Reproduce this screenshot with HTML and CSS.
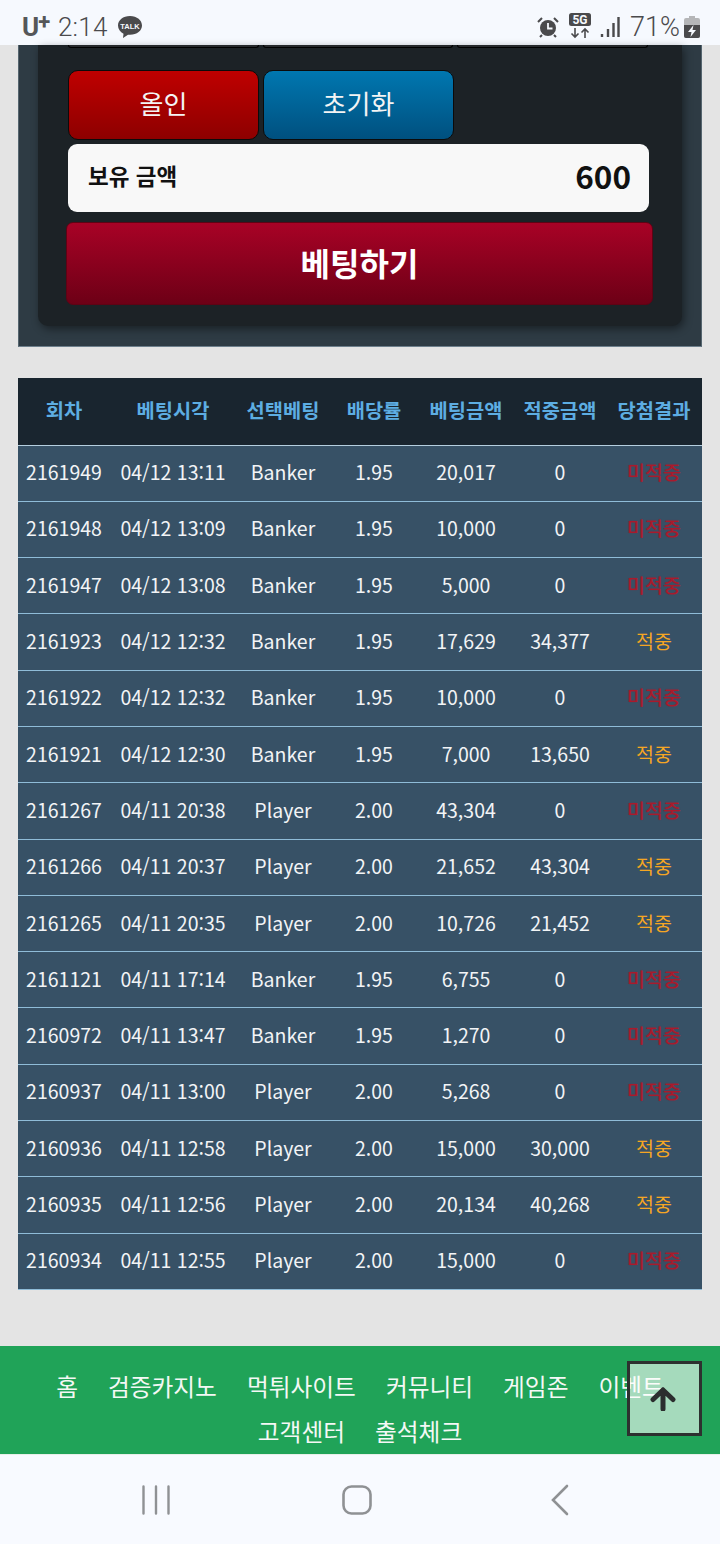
FILE: index.html
```html
<!DOCTYPE html>
<html lang="ko">
<head>
<meta charset="utf-8">
<title>베팅</title>
<link rel="stylesheet" href="styles.css">
</head>
<body>
<div class="screen">
  <header class="status">
    <div class="status-left">
      <span class="carrier">U<sup>+</sup></span>
      <span class="clock">2:14</span>
      <svg class="talk" width="26" height="24" viewBox="0 0 26 24"><path d="M13 1C6 1 1 5.200 1 10.500c0 3.500 2.200 6.500 5.500 8.200L6 23l5-3.300c.7.100 1.300.1 2 .1 7 0 12-4.200 12-9.300S20 1 13 1z" fill="#4a4a4c"/><text x="13" y="13.500" class="talk-text">TALK</text></svg>
    </div>
    <div class="status-right">
      <svg width="22" height="22" viewBox="0 0 22 22"><circle cx="11" cy="12" r="8" fill="#4a4a4c"/><path d="M11 7v5.500h4.500" fill="none" stroke="#f6f9fe" stroke-width="1.800"/><path d="M1 6l4-4M21 6l-4-4M5 19l-2 2M17 19l2 2" stroke="#4a4a4c" stroke-width="2"/></svg>
      <svg class="fiveg" width="24" height="26" viewBox="0 0 24 26"><rect x="1" y="0" width="22" height="13" rx="2.500" fill="#4a4a4c"/><text x="12" y="11" class="fiveg-text">5G</text><path d="M7 15v9M3.500 20.500L7 24l3.500-3.500M17 25v-9M13.500 19.500L17 16l3.500 3.500" fill="none" stroke="#4a4a4c" stroke-width="1.600"/></svg>
      <svg class="signal" width="20" height="22" viewBox="0 0 20 22"><path d="M2 18v3M8 13v8M13.500 7v14M18.500 1v20" stroke="#4a4a4c" stroke-width="2.400" fill="none"/></svg>
      <span class="battery-text">71%</span>
      <svg width="16" height="22" viewBox="0 0 16 22"><path d="M5 0h6v2h3a2 2 0 0 1 2 2v16a2 2 0 0 1-2 2H2a2 2 0 0 1-2-2V4a2 2 0 0 1 2-2h3z" fill="#b5b6b8"/><path d="M0 9h16v11a2 2 0 0 1-2 2H2a2 2 0 0 1-2-2z" fill="#4a4a4c"/><path d="M9.500 9L4 16h3.500L6.500 21 12 14H8.500z" fill="#f6f9fe"/></svg>
    </div>
  </header>

  <main class="content">
    <section class="panel">
      <div class="inner">
        <div class="stub-row">
          <div class="stub"></div><div class="stub"></div><div class="stub"></div>
        </div>
        <div class="btn-row">
          <button class="chip chip-red"><span class="lift">올인</span></button>
          <button class="chip chip-blue"><span class="lift">초기화</span></button>
        </div>
        <div class="balance"><span class="balance-label">보유 금액</span><span class="balance-value">600</span></div>
        <button class="bet"><span class="lift">베팅하기</span></button>
      </div>
    </section>

    <table class="history">
      <colgroup>
        <col class="c1"><col class="c2"><col class="c3"><col class="c4"><col class="c5"><col class="c6"><col class="c7">
      </colgroup>
      <thead>
        <tr><th>회차</th><th>베팅시각</th><th>선택베팅</th><th>배당률</th><th>베팅금액</th><th>적중금액</th><th>당첨결과</th></tr>
      </thead>
      <tbody>
        <tr><td>2161949</td><td>04/12 13:11</td><td>Banker</td><td>1.95</td><td>20,017</td><td>0</td><td class="miss">미적중</td></tr>
        <tr><td>2161948</td><td>04/12 13:09</td><td>Banker</td><td>1.95</td><td>10,000</td><td>0</td><td class="miss">미적중</td></tr>
        <tr><td>2161947</td><td>04/12 13:08</td><td>Banker</td><td>1.95</td><td>5,000</td><td>0</td><td class="miss">미적중</td></tr>
        <tr><td>2161923</td><td>04/12 12:32</td><td>Banker</td><td>1.95</td><td>17,629</td><td>34,377</td><td class="hit">적중</td></tr>
        <tr><td>2161922</td><td>04/12 12:32</td><td>Banker</td><td>1.95</td><td>10,000</td><td>0</td><td class="miss">미적중</td></tr>
        <tr><td>2161921</td><td>04/12 12:30</td><td>Banker</td><td>1.95</td><td>7,000</td><td>13,650</td><td class="hit">적중</td></tr>
        <tr><td>2161267</td><td>04/11 20:38</td><td>Player</td><td>2.00</td><td>43,304</td><td>0</td><td class="miss">미적중</td></tr>
        <tr><td>2161266</td><td>04/11 20:37</td><td>Player</td><td>2.00</td><td>21,652</td><td>43,304</td><td class="hit">적중</td></tr>
        <tr><td>2161265</td><td>04/11 20:35</td><td>Player</td><td>2.00</td><td>10,726</td><td>21,452</td><td class="hit">적중</td></tr>
        <tr><td>2161121</td><td>04/11 17:14</td><td>Banker</td><td>1.95</td><td>6,755</td><td>0</td><td class="miss">미적중</td></tr>
        <tr><td>2160972</td><td>04/11 13:47</td><td>Banker</td><td>1.95</td><td>1,270</td><td>0</td><td class="miss">미적중</td></tr>
        <tr><td>2160937</td><td>04/11 13:00</td><td>Player</td><td>2.00</td><td>5,268</td><td>0</td><td class="miss">미적중</td></tr>
        <tr><td>2160936</td><td>04/11 12:58</td><td>Player</td><td>2.00</td><td>15,000</td><td>30,000</td><td class="hit">적중</td></tr>
        <tr><td>2160935</td><td>04/11 12:56</td><td>Player</td><td>2.00</td><td>20,134</td><td>40,268</td><td class="hit">적중</td></tr>
        <tr><td>2160934</td><td>04/11 12:55</td><td>Player</td><td>2.00</td><td>15,000</td><td>0</td><td class="miss">미적중</td></tr>
      </tbody>
    </table>
  </main>

  <footer class="site-nav">
    <a>홈</a><a>검증카지노</a><a>먹튀사이트</a><a>커뮤니티</a><a>게임존</a><a>이벤트</a><a>고객센터</a><a>출석체크</a>
    <div class="to-top">
      <svg width="26" height="24" viewBox="0 0 26 24"><path d="M13 3L3 12.500M13 3l10 9.500M13 4v18" fill="none" stroke="#2b2d2e" stroke-width="5" stroke-linecap="round"/></svg>
    </div>
  </footer>

  <nav class="android">
    <svg class="recents" width="28" height="30" viewBox="0 0 28 30"><path d="M1.500 1.500v27M14 1.500v27M26.500 1.500v27" stroke="#8f9194" stroke-width="2.400" stroke-linecap="round" fill="none"/></svg>
    <svg class="home" width="30" height="30" viewBox="0 0 30 30"><rect x="1.500" y="1.500" width="27" height="27" rx="8" fill="none" stroke="#8f9194" stroke-width="2.600"/></svg>
    <svg class="back" width="18" height="32" viewBox="0 0 18 32"><path d="M16 2L2 16l14 14" fill="none" stroke="#8f9194" stroke-width="2.600" stroke-linecap="round"/></svg>
  </nav>
</div>
</body>
</html>
```
FILE: styles.css
```css
* { box-sizing: border-box; }
html, body { margin: 0; padding: 0; }
body {
  background: #e4e4e4;
  font-family: "Noto Sans CJK KR", "Noto Sans", sans-serif;
  color: #fff;
}
.screen {
  width: 720px;
  height: 1544px;
  position: relative;
  display: flex;
  flex-direction: column;
  overflow: hidden;
}

/* status bar */
.status {
  height: 45px;
  flex: none;
  background: #f6f9fe;
  color: #4a4a4c;
  display: flex;
  justify-content: space-between;
  align-items: center;
  padding: 8px 20px 0 22px;
  font-family: Roboto, sans-serif;
}
.status-left, .status-right { display: flex; align-items: center; }
.carrier { font-weight: 700; font-size: 26px; line-height: 26px; width: 36px; color: #555759; }
.carrier sup { font-size: 22px; line-height: 0; vertical-align: 7px; margin-left: -1px; }
.clock { font-weight: 300; font-size: 26px; line-height: 30px; letter-spacing: .2px; }
.talk { margin-left: 9px; margin-top: 1px; }
.talk-text { font: 700 7.500px "Liberation Sans", sans-serif; fill: #f6f9fe; text-anchor: middle; }
.status-right svg { flex: none; }
.fiveg { margin-left: 9px; margin-bottom: 2px; }
.fiveg-text { font: 700 12px Roboto, sans-serif; fill: #f6f9fe; text-anchor: middle; }
.signal { margin-left: 8px; }
.battery-text { font-weight: 300; font-size: 27px; line-height: 30px; margin-left: 10px; margin-right: 4px; }

/* betting panel */
.content { flex: 1; padding: 0 18px; }
.panel {
  height: 302px;
  padding: 0 19px 20px 19px;
  background: #2e3b44;
  border-bottom: 1px solid #6d7f8c;
  border-right: 1px solid #55656f;
  border-left: 1px solid #55656f;
}
.inner {
  height: 281px;
  padding: 0 34px 0 30px;
  background: #1c2226;
  border-radius: 0 0 10px 10px;
  box-shadow: 2px 3px 8px rgba(0, 0, 0, .45);
}
.stub-row { display: flex; gap: 4px; }
.stub {
  width: 191px;
  height: 3px;
  border: 1px solid #000;
  border-top: 0;
  border-radius: 0 0 8px 8px;
  background: #26292c;
}
.btn-row { display: flex; gap: 4px; margin-top: 22px; }
.chip {
  width: 191px;
  height: 70px;
  padding: 0;
  border: 1px solid #0b0b0b;
  border-radius: 10px;
  color: #f4f4f4;
  font: 400 26px/1 "Noto Sans CJK KR", sans-serif;
}
.chip-red { background: linear-gradient(#bf0000, #8d0000); }
.chip-blue { background: linear-gradient(#0077b0, #00507f); }
.lift { display: block; margin-top: -4px; }
.balance {
  margin-top: 4px;
  width: 581px;
  height: 68px;
  padding: 0 18px 6px 20px;
  background: #f8f8f8;
  border-radius: 9px;
  color: #111;
  display: flex;
  justify-content: space-between;
  align-items: center;
}
.balance-label { font-weight: 700; font-size: 22.500px; }
.balance-value { font-weight: 700; font-size: 31.500px; }
.bet {
  display: block;
  margin: 10px 0 0 -2px;
  width: 587px;
  height: 83px;
  padding: 0;
  border: 1px solid #5e0314;
  border-radius: 7px;
  background: linear-gradient(#a80226, #6d0016);
  color: #fff;
  font: 700 32px/1 "Noto Sans CJK KR", sans-serif;
}

/* history table */
.history {
  margin-top: 31px;
  width: 684px;
  table-layout: fixed;
  border-collapse: collapse;
  font-size: 19.500px;
  text-align: center;
}
.c1 { width: 92px; }
.c2 { width: 126px; }
.c3 { width: 94px; }
.c4 { width: 88px; }
.c5 { width: 96px; }
.c6 { width: 92px; }
.c7 { width: 96px; }
.history th {
  height: 67px;
  padding: 0 0 3px;
  background: #19252f;
  color: #5dade2;
  font-weight: 700;
  font-size: 19.800px;
  white-space: nowrap;
  border-bottom: 1px solid #b5cfe0;
}
.history td {
  height: 56.300px;
  padding: 0 0 3px;
  background: #375166;
  color: #f2f4f6;
  white-space: nowrap;
  border-bottom: 1px solid #8fbcd8;
}
.history td.miss { color: #a91a2c; text-shadow: 0 0 1px #a91a2c; }
.history td.hit { color: #f5a623; }

/* green site nav */
.site-nav {
  position: relative;
  flex: none;
  height: 108px;
  padding: 18px 40px 0;
  background: #20a358;
  display: flex;
  flex-wrap: wrap;
  justify-content: center;
  align-content: flex-start;
  column-gap: 30px;
  font-size: 23.700px;
  line-height: 45px;
  color: #f4f8f5;
}
.to-top {
  position: absolute;
  left: 627px;
  top: 15px;
  width: 75px;
  height: 75px;
  border: 3px solid #2d302f;
  background: rgba(255, 255, 255, .6);
  display: flex;
  align-items: center;
  justify-content: center;
  padding-right: 3px;
}

/* android nav */
.android {
  flex: none;
  height: 90px;
  background: #f8faff;
  border-top: 1px solid #e8efe9;
  display: flex;
  align-items: center;
  padding: 0 0 0 142px;
}
.home { margin-left: 172px; }
.back { margin-left: 179px; }
```
